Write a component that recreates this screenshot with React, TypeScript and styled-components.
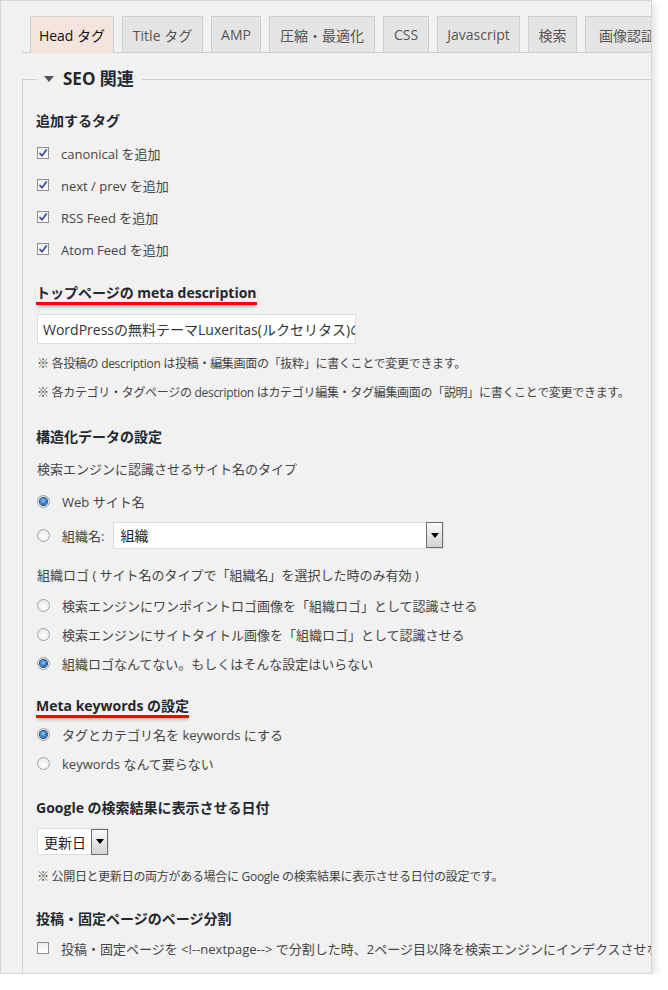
import React from "react"
import styled, { createGlobalStyle } from "styled-components"

const GlobalStyle = createGlobalStyle`
  html, body {
    margin: 0;
    padding: 0;
    background: #fff;
  }
  body {
    font-family: "Open Sans", "Noto Sans CJK JP", sans-serif;
    color: #444;
  }
`

// tabs across the top, widths taken from the screen
const tabs = [
  { label: "Head タグ", width: 84, active: true },
  { label: "Title タグ", width: 81 },
  { label: "AMP", width: 50 },
  { label: "圧縮・最適化", width: 106 },
  { label: "CSS", width: 46 },
  { label: "Javascript", width: 83 },
  { label: "検索", width: 49 },
  { label: "画像認証", width: 84 },
]

function App() {
  return (
    <>
      <GlobalStyle />
      <Panel>
        <TabBar>
          {tabs.map((t) => (
            <Tab key={t.label} $w={t.width} $active={!!t.active}>
              {t.label}
            </Tab>
          ))}
        </TabBar>

        <Fieldset>
          <Legend>
            <Caret />
            SEO 関連
          </Legend>

          <Heading $mt={20}>追加するタグ</Heading>
          <Option $mt={6} $h={32}>
            <CheckBox checked />
            canonical を追加
          </Option>
          <Option $h={32}>
            <CheckBox checked />
            next / prev を追加
          </Option>
          <Option $h={32}>
            <CheckBox checked />
            RSS Feed を追加
          </Option>
          <Option $h={32}>
            <CheckBox checked />
            Atom Feed を追加
          </Option>

          <Marked $mt={16}>
            <span>トップページの meta description</span>
          </Marked>
          <TextInput
            readOnly
            value="WordPressの無料テーマLuxeritas(ルクセリタス)の"
          />
          <Note $mt={11}>
            ※ 各投稿の description は投稿・編集画面の「抜粋」に書くことで変更できます。
          </Note>
          <Note $mt={11}>
            ※ 各カテゴリ・タグページの description はカテゴリ編集・タグ編集画面の「説明」に書くことで変更できます。
          </Note>

          <Heading $mt={25}>構造化データの設定</Heading>
          <Text $mt={12}>検索エンジンに認識させるサイト名のタイプ</Text>
          <Option $mt={6} $h={32}>
            <Radio checked />
            Web サイト名
          </Option>
          <Option $mt={2} $h={32}>
            <Radio />
            組織名:
            <Select $w={331}>
              <span>組織</span>
              <DropButton />
            </Select>
          </Option>
          <Text $mt={14}>組織ロゴ ( サイト名のタイプで「組織名」を選択した時のみ有効 )</Text>
          <Option $mt={6} $h={29}>
            <Radio />
            検索エンジンにワンポイントロゴ画像を「組織ロゴ」として認識させる
          </Option>
          <Option $h={29}>
            <Radio />
            検索エンジンにサイトタイトル画像を「組織ロゴ」として認識させる
          </Option>
          <Option $h={29}>
            <Radio checked />
            組織ロゴなんてない。もしくはそんな設定はいらない
          </Option>

          <Marked $mt={16}>
            <span>Meta keywords の設定</span>
          </Marked>
          <Option $mt={2} $h={29}>
            <Radio checked />
            タグとカテゴリ名を keywords にする
          </Option>
          <Option $h={29}>
            <Radio />
            keywords なんて要らない
          </Option>

          <Heading $mt={20}>Google の検索結果に表示させる日付</Heading>
          <Select $w={72} $mt={10}>
            <span>更新日</span>
            <DropButton />
          </Select>
          <Note $mt={13}>
            ※ 公開日と更新日の両方がある場合に Google の検索結果に表示させる日付の設定です。
          </Note>

          <Heading $mt={23}>投稿・固定ページのページ分割</Heading>
          <Option $mt={3} $h={32}>
            <CheckBox />
            投稿・固定ページを &lt;!--nextpage--&gt; で分割した時、2ページ目以降を検索エンジンにインデクスさせない
          </Option>
        </Fieldset>
      </Panel>
    </>
  )
}

function CheckBox({ checked }: { checked?: boolean }) {
  return (
    <Box>
      {checked && (
        <svg width="10" height="10" viewBox="0 0 10 10">
          <path
            d="M1.5 5.2 L4 7.8 L8.6 1.6"
            fill="none"
            stroke="#3848a0"
            strokeWidth="1.7"
          />
        </svg>
      )}
    </Box>
  )
}

function Radio({ checked }: { checked?: boolean }) {
  return <Round>{checked && <Dot />}</Round>
}

function DropButton() {
  return (
    <Arrow>
      <svg width="8" height="5" viewBox="0 0 8 5">
        <path d="M0 0 H8 L4 5 Z" fill="#000" />
      </svg>
    </Arrow>
  )
}

export default App

// style
const Panel = styled.div`
  width: 652px;
  height: 974px;
  box-sizing: border-box;
  border: 1px solid #d6d6d6;
  background: #f1f1f1;
  overflow: hidden;
  padding-top: 15px;
  box-shadow: 3px 3px 8px rgba(0, 0, 0, 0.12);
`

const TabBar = styled.div`
  display: flex;
  gap: 8px;
  margin-left: 21px;
  padding-left: 8px;
  border-bottom: 1px solid #cfcfcf;
  height: 36px;
  white-space: nowrap;
`

const Tab = styled.div<{ $w: number; $active: boolean }>`
  flex: 0 0 ${(p) => p.$w}px;
  box-sizing: border-box;
  height: ${(p) => (p.$active ? 37 : 36)}px;
  border: 1px solid #cfcfcf;
  border-bottom: none;
  background: ${(p) => (p.$active ? "#f3e5dc" : "#e4e4e4")};
  color: ${(p) => (p.$active ? "#111" : "#555")};
  font-size: 14px;
  display: flex;
  align-items: center;
  justify-content: center;
  overflow: hidden;
`

const Fieldset = styled.fieldset`
  margin: 14px -60px 0 21px;
  padding: 0 0 40px 14px;
  border: 1px solid #cfcfcf;
  min-width: 0;
`

const Legend = styled.legend`
  padding: 0 8px 0 7px;
  font-size: 17px;
  font-weight: 700;
  color: #23282d;
  line-height: 24px;
  display: flex;
  align-items: center;
  gap: 9px;
`

const Caret = styled.span`
  width: 0;
  height: 0;
  border-left: 5px solid transparent;
  border-right: 5px solid transparent;
  border-top: 6px solid #555;
`

const Heading = styled.div<{ $mt?: number }>`
  margin-top: ${(p) => p.$mt ?? 0}px;
  font-size: 14px;
  font-weight: 700;
  line-height: 20px;
  color: #23282d;
  margin-left: -1px;
`

const Marked = styled.div<{ $mt?: number }>`
  margin-top: ${(p) => p.$mt ?? 0}px;
  margin-left: -1px;
  span {
    display: inline-block;
    font-size: 14px;
    font-weight: 700;
    line-height: 18px;
    color: #23282d;
    border-bottom: 3px solid #f00;
    box-shadow: 0 3px 3px -1px rgba(0, 0, 0, 0.22);
  }
`

const Text = styled.div<{ $mt?: number }>`
  margin-top: ${(p) => p.$mt ?? 0}px;
  font-size: 13px;
  line-height: 20px;
  white-space: nowrap;
`

const Note = styled.div<{ $mt?: number }>`
  margin-top: ${(p) => p.$mt ?? 0}px;
  font-size: 12px;
  line-height: 18px;
  letter-spacing: -0.3px;
  white-space: nowrap;
`

const Option = styled.label<{ $mt?: number; $h: number }>`
  margin-top: ${(p) => p.$mt ?? 0}px;
  height: ${(p) => p.$h}px;
  display: flex;
  align-items: center;
  gap: 12px;
  font-size: 13px;
  white-space: nowrap;
`

const Box = styled.span`
  width: 12px;
  height: 12px;
  box-sizing: border-box;
  border: 1px solid #8e8f8f;
  background: linear-gradient(#ececec, #fff);
  display: flex;
  align-items: center;
  justify-content: center;
  flex: none;
`

const Round = styled.span`
  width: 13px;
  height: 13px;
  box-sizing: border-box;
  border-radius: 50%;
  border: 1px solid #a3a3a3;
  background: radial-gradient(circle at 50% 65%, #fff, #e2e2e2);
  display: flex;
  align-items: center;
  justify-content: center;
  flex: none;
`

const Dot = styled.span`
  width: 7px;
  height: 7px;
  border-radius: 50%;
  background: radial-gradient(circle at 45% 40%, #8fd0ff, #2a78c4 55%, #0d3f7a);
  box-shadow: 0 0 0 1px #21446c;
`

const TextInput = styled.input`
  margin-top: 9px;
  width: 319px;
  height: 30px;
  box-sizing: border-box;
  border: 1px solid #ddd;
  background: #fff;
  padding: 0 0 0 5px;
  font-family: "Open Sans", "Noto Sans CJK JP", sans-serif;
  font-size: 14px;
  color: #333;
  outline: none;
  display: block;
`

const Select = styled.div<{ $w: number; $mt?: number }>`
  margin-top: ${(p) => p.$mt ?? 0}px;
  width: ${(p) => p.$w}px;
  height: 27px;
  box-sizing: border-box;
  border: 1px solid #ddd;
  background: #fff;
  display: flex;
  align-items: center;
  justify-content: space-between;
  padding-left: 6px;
  font-size: 14px;
  color: #222;
  margin-left: ${(p) => (p.$mt ? 0 : -3)}px;
`

const Arrow = styled.span`
  width: 17px;
  height: 26px;
  box-sizing: border-box;
  border: 1px solid #6e6e6e;
  background: linear-gradient(#fafafa, #d2d2d2);
  display: flex;
  align-items: center;
  justify-content: center;
`
